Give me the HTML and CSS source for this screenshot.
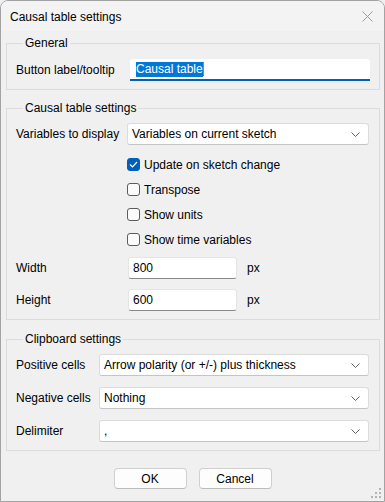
FILE: index.html
```html
<!DOCTYPE html>
<html>
<head>
<meta charset="utf-8">
<link rel="stylesheet" href="styles.css">
</head>
<body>
<div class="window">
  <div class="titlebar">
    <span class="title">Causal table settings</span>
    <svg class="close" width="11" height="11" viewBox="0 0 11 11"><path d="M0.5 0.5 L10.5 10.5 M10.5 0.5 L0.5 10.5" stroke="#9c9c9c" stroke-width="1" fill="none"/></svg>
  </div>

  <fieldset class="group">
    <legend>General</legend>
    <div class="grid grid-general">
      <span class="label">Button label/tooltip</span>
      <div class="textbox focused"><span class="sel">Causal table</span><span class="caret"></span></div>
    </div>
  </fieldset>

  <fieldset class="group group-mid">
    <legend>Causal table settings</legend>
    <div class="grid grid-table">
      <span class="label">Variables to display</span>
      <div class="combo"><span>Variables on current sketch</span><svg class="chev" width="9" height="5" viewBox="0 0 9 5"><path d="M0.5 0.5 L4.5 4.5 L8.5 0.5" stroke="#606060" stroke-width="1" fill="none"/></svg></div>

      <div class="checks">
        <div class="check"><span class="box checked"><svg width="9" height="7" viewBox="0 0 9 7"><path d="M1 3.5 L3.5 6 L8 1" stroke="#fff" stroke-width="1.2" fill="none"/></svg></span>Update on sketch change</div>
        <div class="check"><span class="box"></span>Transpose</div>
        <div class="check"><span class="box"></span>Show units</div>
        <div class="check"><span class="box"></span>Show time variables</div>
      </div>

      <span class="label">Width</span>
      <div class="numrow"><div class="textbox num">800</div><span class="unit">px</span></div>
      <span class="label">Height</span>
      <div class="numrow"><div class="textbox num">600</div><span class="unit">px</span></div>
    </div>
  </fieldset>

  <fieldset class="group group-mid group-clip">
    <legend>Clipboard settings</legend>
    <div class="grid grid-clip">
      <span class="label">Positive cells</span>
      <div class="combo"><span>Arrow polarity (or +/-) plus thickness</span><svg class="chev" width="9" height="5" viewBox="0 0 9 5"><path d="M0.5 0.5 L4.5 4.5 L8.5 0.5" stroke="#606060" stroke-width="1" fill="none"/></svg></div>
      <span class="label">Negative cells</span>
      <div class="combo"><span>Nothing</span><svg class="chev" width="9" height="5" viewBox="0 0 9 5"><path d="M0.5 0.5 L4.5 4.5 L8.5 0.5" stroke="#606060" stroke-width="1" fill="none"/></svg></div>
      <span class="label">Delimiter</span>
      <div class="combo"><span>,</span><svg class="chev" width="9" height="5" viewBox="0 0 9 5"><path d="M0.5 0.5 L4.5 4.5 L8.5 0.5" stroke="#606060" stroke-width="1" fill="none"/></svg></div>
    </div>
  </fieldset>

  <div class="buttons">
    <div class="btn">OK</div>
    <div class="btn">Cancel</div>
  </div>

  <svg class="grip" width="11" height="11" viewBox="0 0 11 11">
    <rect x="8" y="0" width="2" height="2" fill="#b4b4b4"/>
    <rect x="4" y="4" width="2" height="2" fill="#b4b4b4"/>
    <rect x="8" y="4" width="2" height="2" fill="#b4b4b4"/>
    <rect x="0" y="8" width="2" height="2" fill="#b4b4b4"/>
    <rect x="4" y="8" width="2" height="2" fill="#b4b4b4"/>
    <rect x="8" y="8" width="2" height="2" fill="#b4b4b4"/>
  </svg>
</div>
</body>
</html>
```

FILE: styles.css
```css
* { box-sizing: border-box; }
html, body { margin: 0; padding: 0; background: #f0f0f0; }
body {
  font-family: "Liberation Sans", Arial, sans-serif;
  font-size: 12px;
  color: #000;
}
.window {
  position: relative;
  width: 385px;
  height: 502px;
  border: 1px solid #a3a3a3;
  border-radius: 8px 8px 0 0;
  background: #f0f0f0;
  overflow: hidden;
}
.titlebar {
  height: 30px;
  background: #f3f3f3;
  display: flex;
  align-items: center;
  justify-content: space-between;
  padding: 0 11px 0 9px;
}
.title { line-height: 30px; padding-top: 2px; }
.close { display: block; margin-top: 1px; }

.group {
  margin: 4px 4px 0 5px;
  padding: 8px 9px 8px 9px;
  border: 1px solid #dcdcdc;
  min-width: 0;
}
.group-mid { margin-top: 10px; padding-top: 7px; padding-right: 10px; }
.group-clip { margin-top: 11px; }
.group legend {
  margin-left: 7px;
  padding: 0 2px;
  line-height: 16px;
}
.grid {
  display: grid;
  align-items: center;
}
.grid-general { grid-template-columns: 114px 240px; }
.grid-table { grid-template-columns: 111px 242px; }
.grid-clip { grid-template-columns: 83px 270px; row-gap: 11px; }
.label { white-space: nowrap; }

.textbox {
  height: 22px;
  background: #fff;
  border: 1px solid #e5e5e5;
  border-bottom-color: #8a8a8a;
  border-radius: 3px;
  padding: 0 5px;
  display: flex;
  align-items: center;
}
.textbox.focused {
  border: none;
  border-bottom: 2px solid #005fb8;
  border-radius: 3px 3px 0 0;
  padding: 0 0 0 6px;
}
.sel {
  background: #0078d7;
  color: #fff;
  line-height: 14px;
  padding: 0 0 1px 0;
}
.caret {
  width: 1px;
  height: 14px;
  background: #e07020;
}

.combo {
  height: 22px;
  background: #fff;
  border: 1px solid #dcdcdc;
  border-bottom-color: #c4c4c4;
  border-radius: 3px;
  padding: 0 8px 0 4px;
  display: flex;
  align-items: center;
  justify-content: space-between;
  white-space: nowrap;
}
.chev { display: block; flex: none; }

.checks {
  grid-column: 2;
  padding-top: 7px;
  padding-bottom: 5px;
}
.check {
  height: 25px;
  display: flex;
  align-items: center;
  gap: 4px;
  white-space: nowrap;
}
.box {
  width: 13px;
  height: 13px;
  border: 1px solid #5c5c5c;
  border-radius: 3px;
  background: #fbfbfb;
  display: flex;
  align-items: center;
  justify-content: center;
  flex: none;
}
.box.checked { background: #005fb8; border-color: #005fb8; }
.box svg { display: block; }

.numrow {
  display: flex;
  align-items: center;
  gap: 10px;
  margin-left: 1px;
}
.numrow + .label, .numrow + .label + .numrow { margin-top: 10px; }
.textbox.num { width: 109px; padding-left: 4px; }

.buttons {
  display: flex;
  justify-content: center;
  gap: 12px;
  margin-top: 17px;
}
.btn {
  width: 73px;
  height: 21px;
  background: #fdfdfd;
  border: 1px solid #d0d0d0;
  border-bottom-color: #bcbcbc;
  border-radius: 4px;
  display: flex;
  align-items: center;
  justify-content: center;
}
.grip {
  position: absolute;
  right: 2px;
  bottom: 2px;
}
```
